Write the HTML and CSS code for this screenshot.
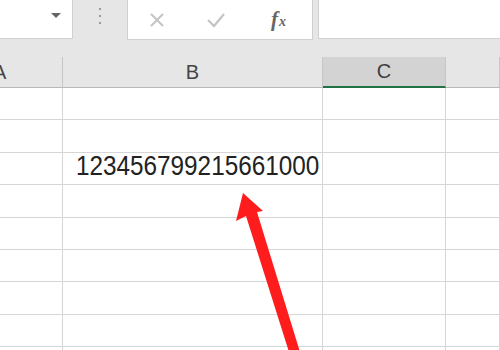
FILE: index.html
```html
<!DOCTYPE html>
<html>
<head>
<meta charset="utf-8">
<link rel="stylesheet" href="styles.css">
</head>
<body>
<div class="app">
  <div class="toolbar">
    <div class="namebox"><span class="caret"></span></div>
    <div class="grip"><i></i><i></i><i></i></div>
    <div class="fxbox">
      <span class="btn x">
        <svg width="16" height="16" viewBox="0 0 16 16"><path d="M2 2L14 14M14 2L2 14" stroke="#c4c4c4" stroke-width="2" fill="none"/></svg>
      </span>
      <span class="btn ok">
        <svg width="20" height="16" viewBox="0 0 20 16"><path d="M2 8L8 14L18 2" stroke="#c4c4c4" stroke-width="2.2" fill="none"/></svg>
      </span>
      <span class="btn fx"><span class="f">f</span><span class="xs">x</span></span>
    </div>
    <div class="formula"></div>
  </div>
  <div class="gap"></div>
  <div class="sheet">
    <div class="hdr">A</div>
    <div class="hdr">B</div>
    <div class="hdr sel">C</div>
    <div class="hdr"></div>

    <div class="cell"></div><div class="cell"></div><div class="cell"></div><div class="cell"></div>
    <div class="cell"></div><div class="cell"></div><div class="cell"></div><div class="cell"></div>
    <div class="cell"></div><div class="cell num"><span>123456799215661000</span></div><div class="cell"></div><div class="cell"></div>
    <div class="cell"></div><div class="cell"></div><div class="cell"></div><div class="cell"></div>
    <div class="cell"></div><div class="cell"></div><div class="cell"></div><div class="cell"></div>
    <div class="cell"></div><div class="cell"></div><div class="cell"></div><div class="cell"></div>
    <div class="cell"></div><div class="cell"></div><div class="cell"></div><div class="cell"></div>
    <div class="cell"></div><div class="cell"></div><div class="cell"></div><div class="cell"></div>
    <div class="cell"></div><div class="cell"></div><div class="cell"></div><div class="cell"></div>
  </div>
  <svg class="arrow" width="500" height="350" viewBox="0 0 500 350">
    <polygon points="243,193 263,211 257,212 300,352 289,352 246,216 236,221" fill="#ff1c1c"/>
  </svg>
</div>
</body>
</html>
```
FILE: styles.css
```css
html, body {
  margin: 0;
  padding: 0;
  background: #e6e6e6;
  font-family: "Liberation Sans", Arial, sans-serif;
}
.app {
  position: relative;
  width: 500px;
  height: 350px;
  overflow: hidden;
  background: #e6e6e6;
}
.toolbar {
  display: flex;
  height: 39px;
}
.namebox {
  width: 72px;
  background: #fff;
  border-right: 1px solid #d0d0d0;
  border-bottom: 1px solid #d0d0d0;
  position: relative;
}
.caret {
  position: absolute;
  left: 51px;
  top: 13px;
  width: 0;
  height: 0;
  border-left: 5px solid transparent;
  border-right: 5px solid transparent;
  border-top: 5px solid #666;
}
.grip {
  width: 54px;
  display: flex;
  flex-direction: column;
  align-items: center;
  padding-top: 8px;
  gap: 5px;
  box-sizing: border-box;
}
.grip i {
  display: block;
  width: 2px;
  height: 2px;
  background: #9a9a9a;
}
.fxbox {
  width: 186px;
  background: #fff;
  border-left: 1px solid #d0d0d0;
  border-right: 1px solid #d0d0d0;
  border-bottom: 1px solid #d0d0d0;
  display: flex;
  align-items: center;
  box-sizing: border-box;
  height: 40px;
}
.btn {
  display: flex;
  align-items: center;
  justify-content: center;
}
.btn.x { margin-left: 21px; width: 16px; }
.btn.ok { margin-left: 41px; width: 20px; }
.btn.fx {
  margin-left: 45px;
  font-family: "Liberation Serif", "Times New Roman", serif;
  font-style: italic;
  font-weight: bold;
  color: #666;
  align-items: baseline;
}
.fx .f { font-size: 21px; }
.fx .xs { font-size: 14px; margin-left: 1px; }
.formula {
  flex: 1;
  margin-left: 5px;
  background: #fff;
  border-left: 1px solid #d0d0d0;
  border-bottom: 1px solid #d0d0d0;
}
.gap { height: 18px; }
.sheet {
  display: grid;
  grid-template-columns: 63px 260px 123px 54px;
  grid-template-rows: 31px repeat(9, 32.4px);
  background: #fff;
}
.hdr {
  background: #e6e6e6;
  border-right: 1px solid #c6c6c6;
  border-bottom: 1px solid #b8b8b8;
  display: flex;
  align-items: center;
  justify-content: center;
  font-size: 20px;
  color: #444;
  box-sizing: border-box;
}
.hdr:first-child {
  justify-content: flex-start;
  text-indent: -7px;
}
.hdr.sel {
  background: #d3d3d3;
  border-bottom: 2px solid #217346;
  color: #3e3e3e;
}
.cell {
  background: #fff;
  border-right: 1px solid #d6d6d6;
  border-bottom: 1px solid #d6d6d6;
  box-sizing: border-box;
}
.cell.num {
  display: flex;
  align-items: flex-end;
  padding-left: 13px;
  padding-bottom: 2px;
  font-size: 24.3px;
  color: #222;
  white-space: nowrap;
}
.cell.num span {
  display: inline-block;
  transform: scaleY(1.1);
  transform-origin: 0 100%;
}
.arrow {
  position: absolute;
  left: 0;
  top: 0;
}
```
